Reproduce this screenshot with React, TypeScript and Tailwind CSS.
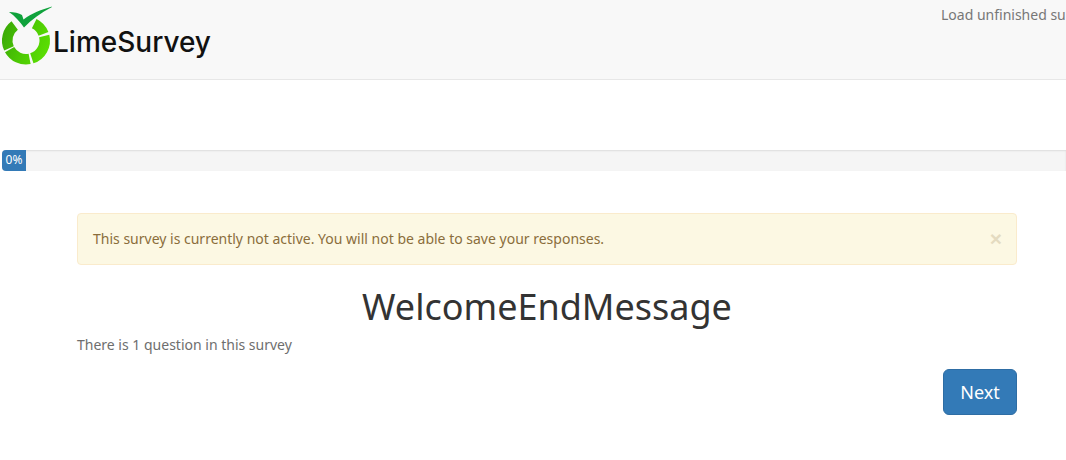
import React from 'react';

const Logo: React.FC = () => (
  <div className="flex items-end h-[66px] w-[212px]">
    <svg width="52" height="66" viewBox="0 0 52 66" className="shrink-0">
      <defs>
        <linearGradient id="ring" gradientUnits="userSpaceOnUse" x1="2" y1="30" x2="50" y2="50">
          <stop offset="0" stopColor="#3aa806" />
          <stop offset="0.5" stopColor="#4cc804" />
          <stop offset="1" stopColor="#5ce002" />
        </linearGradient>
      </defs>
      <path d="M9 12 C 14 12 19 13 22 15 L 23.5 19.5 C 32 13 43 9 54 6 C 42 12 32 19 24 27.5 C 20 22 15 16 9 12 Z" fill="#10a23c" />
      <g fill="none" stroke="url(#ring)" strokeWidth="10.5">
        <path d="M14.7 25.5 A18.75 18.75 0 0 0 9 48.4" />
        <path d="M9.6 49.6 A18.75 18.75 0 0 0 29.6 58.9" />
        <path d="M31.8 58.3 A18.75 18.75 0 0 0 44.2 36" />
        <path d="M34.2 23.6 A18.75 18.75 0 0 1 43.5 33.8" />
      </g>
    </svg>
    <span className="font-['Inter',sans-serif] font-medium text-[28px] leading-none text-[#111] ml-[1px] mb-[10px]">LimeSurvey</span>
  </div>
);

export default function App() {
  return (
    <div className="h-[460px] w-[1066px] overflow-hidden bg-white font-['Noto_Sans',sans-serif] text-[14px] text-[#6e6e6e]">
      <header className="h-[80px] bg-[#f8f8f8] border-b border-[#e7e7e7] flex justify-between">
        <Logo />
        <div className="w-[125px] overflow-hidden whitespace-nowrap pt-[5px] leading-[20px] text-[#777]">Load unfinished survey</div>
      </header>

      <div className="mt-[70px] ml-[2px] h-[21px] bg-[#f5f5f5] rounded-l-[4px] shadow-[inset_0_1px_2px_rgba(0,0,0,0.1)] overflow-hidden">
        <div className="w-[24px] h-full bg-[#337ab7] text-white text-[12px] leading-[19px] text-center">0%</div>
      </div>

      <main className="mt-[42px] w-[940px] ml-[77px]">
        <div className="h-[52px] bg-[#fcf8e3] border border-[#faebcc] rounded-[4px] pl-[15px] pr-[15px] pb-[2px] flex items-center justify-between text-[#8a6d3b]">
          <span>This survey is currently not active. You will not be able to save your responses.</span>
          <span className="text-[21px] font-bold leading-none font-['Liberation_Sans',sans-serif] text-[#8a6d3b] opacity-20 -mr-[1px]">×</span>
        </div>
        <h1 className="mt-[17px] h-[50px] text-center text-[36px] leading-[50px] font-normal text-[#333]">WelcomeEndMessage</h1>
        <p className="mt-[3px] leading-[20px]">There is 1 question in this survey</p>
        <div className="flex justify-end mt-[14px]">
          <button className="w-[74px] h-[46px] bg-[#337ab7] border border-[#2e6da4] rounded-[6px] text-white text-[18px]">Next</button>
        </div>
      </main>
    </div>
  );
}
